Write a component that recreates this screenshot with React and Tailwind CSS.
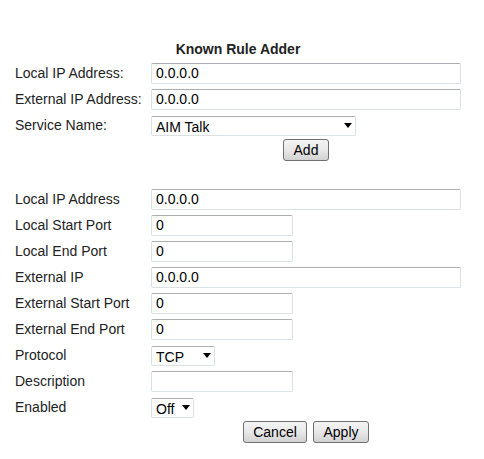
import React from "react";

const font = { fontFamily: '"Liberation Sans", Arial, sans-serif' };

const TextBox = ({ value = "", w }) => (
  <input
    readOnly
    value={value}
    className={`${w} h-[21px] px-[4px] text-[14px] text-black bg-white border border-[#dbdfe6] border-t-[#abadb3] rounded-[2px] outline-none`}
  />
);

const Select = ({ value, w }) => (
  <div className={`relative ${w} h-[20px]`}>
    <select
      value={value}
      onChange={() => {}}
      className="appearance-none w-full h-full pl-[4px] text-[14px] text-black bg-white border border-[#dbdfe6] border-t-[#abadb3] rounded-[2px] outline-none"
    >
      <option>{value}</option>
    </select>
    <svg
      className="absolute right-[4px] top-[8px] pointer-events-none"
      width="8"
      height="5"
      viewBox="0 0 8 5"
    >
      <path d="M0 0h8L4 5z" fill="#000" />
    </svg>
  </div>
);

const Button = ({ children, w }) => (
  <button
    className={`${w} h-[22px] text-[14px] text-black leading-none border border-[#707070] rounded-[3px] bg-gradient-to-b from-[#f4f4f4] via-[#e8e8e8] to-[#d2d2d2]`}
  >
    {children}
  </button>
);

const Row = ({ label, children }) => (
  <div className="flex items-center h-[26px]">
    <div className="w-[136px] shrink-0 text-[14px] text-[#222]">{label}</div>
    {children}
  </div>
);

export default function App() {
  return (
    <div className="w-[484px] h-[459px] bg-white pl-[15px] pt-[39px]" style={font}>
      <div className="w-[446px]">
        {/* Known rule adder */}
        <div className="h-[21px] leading-[20px] text-center text-[14px] font-bold text-[#222]">
          Known Rule Adder
        </div>
        <Row label="Local IP Address:">
          <TextBox value="0.0.0.0" w="w-[310px]" />
        </Row>
        <Row label="External IP Address:">
          <TextBox value="0.0.0.0" w="w-[310px]" />
        </Row>
        <Row label="Service Name:">
          <Select value="AIM Talk" w="w-[205px]" />
        </Row>
        <div className="flex pl-[136px] pt-[1px]">
          <div className="w-[310px] flex justify-center">
            <Button w="w-[46px]">Add</Button>
          </div>
        </div>

        {/* Custom rule */}
        <div className="h-[25px]" />
        <Row label="Local IP Address">
          <TextBox value="0.0.0.0" w="w-[310px]" />
        </Row>
        <Row label="Local Start Port">
          <TextBox value="0" w="w-[142px]" />
        </Row>
        <Row label="Local End Port">
          <TextBox value="0" w="w-[142px]" />
        </Row>
        <Row label="External IP">
          <TextBox value="0.0.0.0" w="w-[310px]" />
        </Row>
        <Row label="External Start Port">
          <TextBox value="0" w="w-[142px]" />
        </Row>
        <Row label="External End Port">
          <TextBox value="0" w="w-[142px]" />
        </Row>
        <Row label="Protocol">
          <Select value="TCP" w="w-[64px]" />
        </Row>
        <Row label="Description">
          <TextBox value="" w="w-[142px]" />
        </Row>
        <Row label="Enabled">
          <Select value="Off" w="w-[43px]" />
        </Row>
        <div className="flex pl-[136px] pt-[1px]">
          <div className="w-[310px] flex justify-center gap-[6px]">
            <Button w="w-[64px]">Cancel</Button>
            <Button w="w-[56px]">Apply</Button>
          </div>
        </div>
      </div>
    </div>
  );
}
